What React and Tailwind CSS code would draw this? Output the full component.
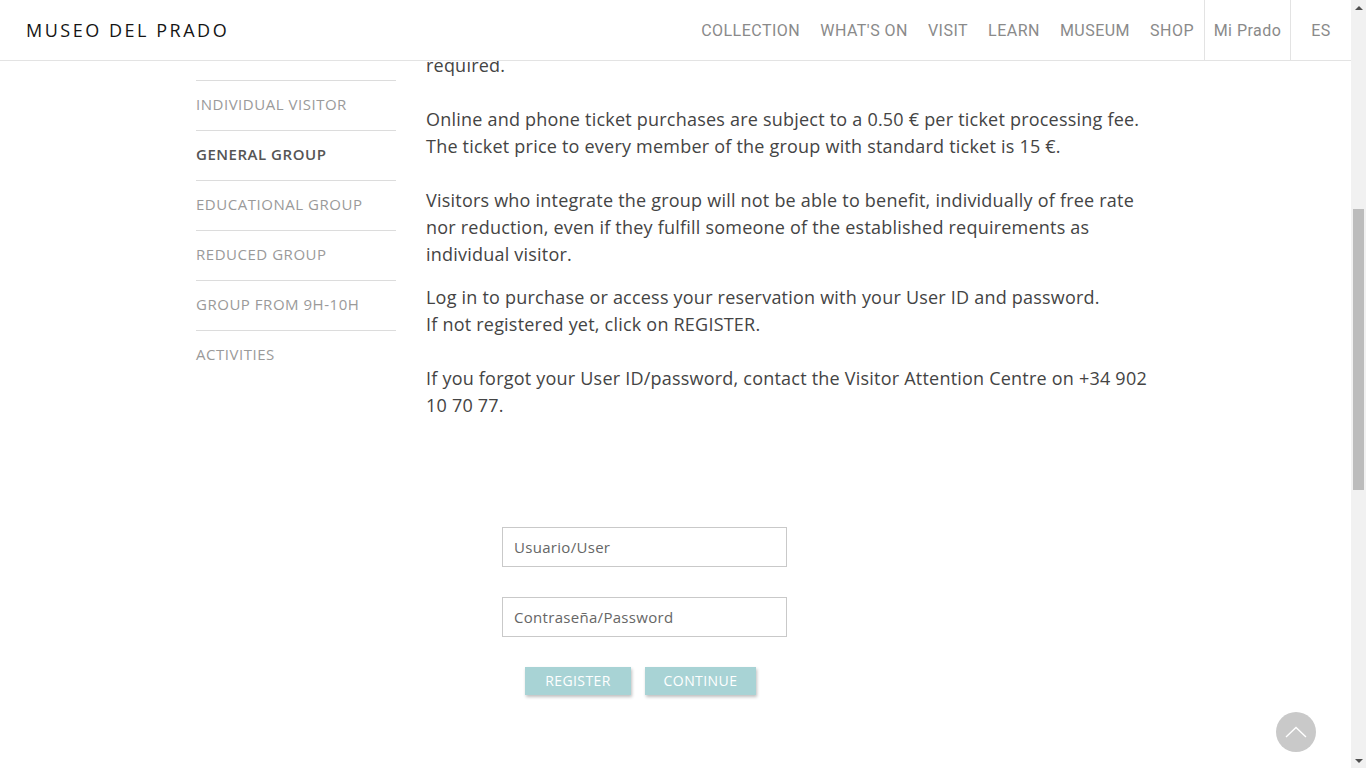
import { useState } from "react";

/* ============================================================
 * MUSEO DEL PRADO — group tickets login
 * ============================================================ */

const NAV = ["COLLECTION", "WHAT'S ON", "VISIT", "LEARN", "MUSEUM", "SHOP"];

const SIDE = [
  { label: "INDIVIDUAL VISITOR" },
  { label: "GENERAL GROUP", active: true },
  { label: "EDUCATIONAL GROUP" },
  { label: "REDUCED GROUP" },
  { label: "GROUP FROM 9H-10H" },
  { label: "ACTIVITIES" },
];

function Header() {
  return (
    <header className="fixed top-0 left-0 right-[15px] z-20 h-[61px] bg-white border-b border-[#e3e3e3] flex items-stretch">
      <div className="flex items-center pl-[26px] text-[18px] tracking-[0.14em] text-[#151515] font-['Open_Sans',sans-serif]">
        MUSEO DEL PRADO
      </div>
      <nav className="ml-auto flex items-stretch pt-[2px] font-['Roboto',sans-serif] text-[16px] tracking-[0.03em] text-[#8a8a8a]">
        <ul className="flex items-center gap-[20px] pr-[10px]">
          {NAV.map((n) => (
            <li key={n}>{n}</li>
          ))}
        </ul>
        <div className="w-[86px] -mt-[2px] pt-[2px] border-l border-[#e3e3e3] flex items-center justify-center">
          Mi Prado
        </div>
        <div className="w-[61px] -mt-[2px] pt-[2px] border-l border-[#e3e3e3] flex items-center justify-center">
          ES
        </div>
      </nav>
    </header>
  );
}

function Sidebar() {
  return (
    <ul className="w-[200px] mt-[28px] font-['Open_Sans',sans-serif] text-[15px] tracking-[0.035em]">
      {SIDE.map((s) => (
        <li
          key={s.label}
          className={`h-[50px] flex items-center pb-[2px] border-t border-[#dcdcdc] ${s.active ? "text-[#555] font-semibold" : "text-[#9a9a9a]"}`}
        >
          {s.label}
        </li>
      ))}
    </ul>
  );
}

function LoginForm() {
  const [user, setUser] = useState("");
  const [pass, setPass] = useState("");
  return (
    <div className="ml-[76px] mt-[108px] w-[285px] font-['Open_Sans',sans-serif]">
      <input
        value={user}
        onChange={(e) => setUser(e.target.value)}
        placeholder="Usuario/User"
        className="block w-full h-[40px] px-[11px] border border-[#c9c9c9] text-[15px] tracking-[0.02em] text-[#555] placeholder:text-[#666] outline-none"
      />
      <input
        type="password"
        value={pass}
        onChange={(e) => setPass(e.target.value)}
        placeholder="Contraseña/Password"
        className="block w-full h-[40px] mt-[30px] px-[11px] border border-[#c9c9c9] text-[15px] tracking-[0.02em] text-[#555] placeholder:text-[#666] outline-none"
      />
      <div className="mt-[30px] flex justify-center gap-[14px] pr-[8px]">
        <button className="h-[28px] w-[106px] pb-[1px] bg-[#a8d3d5] text-white text-[14px] tracking-[0.03em] shadow-[1px_2px_3px_rgba(0,0,0,0.25)]">
          REGISTER
        </button>
        <button className="h-[28px] w-[111px] pb-[1px] bg-[#a8d3d5] text-white text-[14px] tracking-[0.03em] shadow-[1px_2px_3px_rgba(0,0,0,0.25)]">
          CONTINUE
        </button>
      </div>
    </div>
  );
}

function Scrollbar() {
  return (
    <div className="fixed top-0 right-0 w-[15px] h-[768px] bg-[#f1f1f1] flex flex-col items-center">
      <div className="h-[15px] flex items-center justify-center">
        <div className="w-0 h-0 border-l-[4px] border-r-[4px] border-b-[4px] border-l-transparent border-r-transparent border-b-[#505050]" />
      </div>
      <div className="mt-[194px] w-[11px] h-[281px] bg-[#bcbcbc]" />
      <div className="mt-auto h-[15px] flex items-center justify-center">
        <div className="w-0 h-0 border-l-[4px] border-r-[4px] border-t-[4px] border-l-transparent border-r-transparent border-t-[#505050]" />
      </div>
    </div>
  );
}

export default function App() {
  return (
    <div className="min-h-[768px] w-[1366px] bg-white overflow-hidden">
      <Header />
      <main className="flex pt-[52px] pl-[196px] pb-[80px]">
        <Sidebar />
        <div className="ml-[30px] w-[760px]">
          <div className="font-['Open_Sans',sans-serif] text-[18px] tracking-[0.012em] leading-[27px] text-[#444] whitespace-nowrap">
            <p>required.</p>
            <p className="mt-[27px]">
              Online and phone ticket purchases are subject to a 0.50 € per ticket processing fee.
              <br />
              The ticket price to every member of the group with standard ticket is 15 €.
            </p>
            <p className="mt-[27px]">
              Visitors who integrate the group will not be able to benefit, individually of free rate
              <br />
              nor reduction, even if they fulfill someone of the established requirements as
              <br />
              individual visitor.
            </p>
            <p className="mt-[16px]">
              Log in to purchase or access your reservation with your User ID and password.
              <br />
              If not registered yet, click on REGISTER.
            </p>
            <p className="mt-[27px]">
              If you forgot your User ID/password, contact the Visitor Attention Centre on +34 902
              <br />
              10 70 77.
            </p>
          </div>
          <LoginForm />
        </div>
      </main>
      <button className="fixed left-[1276px] top-[712px] w-[40px] h-[40px] rounded-full bg-[#c9c9c9] flex items-center justify-center">
        <svg width="22" height="12" viewBox="0 0 22 12" fill="none">
          <path d="M1 11 L11 1.5 L21 11" stroke="white" strokeWidth="1.4" />
        </svg>
      </button>
      <Scrollbar />
    </div>
  );
}
